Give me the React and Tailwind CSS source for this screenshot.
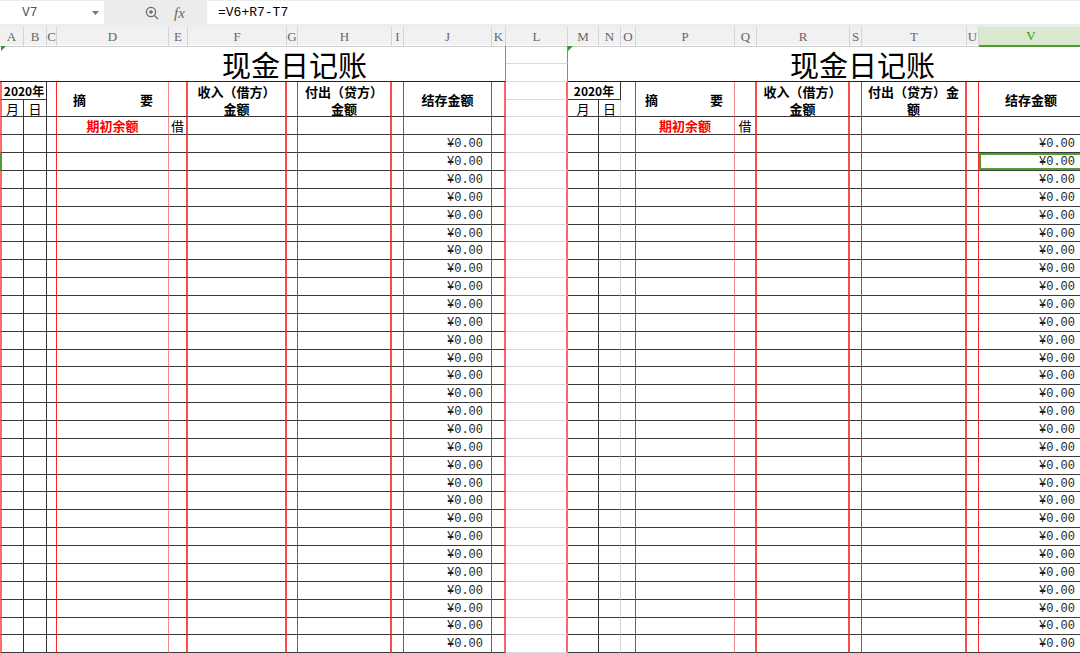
import React from 'react';

const COLS = ['A', 'B', 'C', 'D', 'E', 'F', 'G', 'H', 'I', 'J', 'K', 'L', 'M', 'N', 'O', 'P', 'Q', 'R', 'S', 'T', 'U', 'V'];

// right border of each column inside the two ledgers
const RB = {
  A: 'border-r border-r-[#333]',
  B: 'border-r border-r-[#333]',
  C: 'border-r border-r-[#ff2424]',
  D: 'border-r border-r-[#f58c8c]',
  E: 'border-r-2 border-r-[#ff4a4a]',
  F: 'border-r-2 border-r-[#ff4a4a]',
  G: 'border-r border-r-[#ff2424]',
  H: 'border-r-2 border-r-[#ff4a4a]',
  I: 'border-r border-r-[#ff2424]',
  J: 'border-r border-r-[#ff2424]',
  K: 'border-r-2 border-r-[#ff6464]',
  L: 'border-r-2 border-r-[#ff6464]',
  M: 'border-r border-r-[#333]',
  N: 'border-r border-r-[#d4d4d4]',
  O: 'border-r border-r-[#ff2424]',
  P: 'border-r border-r-[#f58c8c]',
  Q: 'border-r-2 border-r-[#ff4a4a]',
  R: 'border-r-2 border-r-[#ff4a4a]',
  S: 'border-r border-r-[#ff2424]',
  T: 'border-r-2 border-r-[#ff4a4a]',
  U: 'border-r border-r-[#ff2424]',
  V: '',
};

const LINE = 'border-b border-b-[#3a3a3a]';
const GRIDLINE = 'border-b border-b-[#dadada]';
const LEFT_EDGE = 'border-l-2 border-l-[#ff6a6a]';

function Cell({ col, className = '', children }) {
  const bottom = col === 'L' ? GRIDLINE : LINE;
  const left = col === 'A' ? LEFT_EDGE : '';
  return (
    <div className={`flex items-center overflow-hidden whitespace-nowrap pt-[1px] ${RB[col]} ${bottom} ${left} ${className}`}>
      {children}
    </div>
  );
}

function Money() {
  return <span className="ml-auto pr-[8px] font-['Liberation_Mono',monospace] text-[12px] text-[#222]">¥0.00</span>;
}

function FormulaBar() {
  return (
    <div className="flex h-[27px] items-start bg-[#ececec] pt-[1px]">
      <div className="flex h-[23px] w-[104px] items-center justify-between bg-white pl-[22px] pr-[5px]">
        <span className="font-['Liberation_Mono',monospace] text-[13px] text-[#555]">V7</span>
        <svg width="7" height="4" viewBox="0 0 7 4"><path d="M0 0h7L3.5 4z" fill="#777" /></svg>
      </div>
      <div className="flex h-[23px] w-[103px] items-center">
        <svg className="ml-[41px]" width="14" height="14" viewBox="0 0 14 14" fill="none" stroke="#6a6a6a" strokeWidth="1.3">
          <circle cx="6" cy="6" r="4.6" />
          <path d="M9.4 9.4 13 13" />
          <path d="M4 6h4M6 4v4" />
        </svg>
        <span className="ml-[15px] font-['Liberation_Serif',serif] text-[15px] italic text-[#666]">fx</span>
      </div>
      <div className="flex h-[23px] flex-1 items-center bg-white pl-[11px]">
        <span className="font-['Liberation_Mono',monospace] text-[13px] text-black">=V6+R7-T7</span>
      </div>
    </div>
  );
}

function ColumnHeaders() {
  return (
    <div className="grid h-[18px] grid-cols-[24px_23px_10px_112px_19px_99px_11px_94px_12px_88px_14px_62px_31px_22px_15px_99px_22px_93px_12px_105px_12px_104px] bg-[#f1f1f1]">
      {COLS.map((c) =>
        c === 'V' ? (
          <div key={c} className="flex items-center justify-center border-b-2 border-b-[#4e9e2f] bg-[#d8e9cf] font-['Liberation_Serif',serif] text-[13px] text-[#3f9020]">
            {c}
          </div>
        ) : (
          <div key={c} className="flex items-center justify-center overflow-hidden border-r border-b border-r-[#d4d4d4] border-b-[#cdcdcd] font-['Liberation_Serif',serif] text-[13px] text-[#666]">
            {c}
          </div>
        )
      )}
    </div>
  );
}

function HeaderCells() {
  const spread = (side) => (
    <div className={`flex w-full justify-between font-bold ${side}`}>
      <span>摘</span>
      <span>要</span>
    </div>
  );
  const two = 'row-span-2 flex-col justify-center font-bold leading-[17px]';
  return (
    <>
      {/* row 3 */}
      <div className={`col-span-2 flex items-center justify-center pt-[1px] text-[12px] font-bold ${LEFT_EDGE} ${RB.B} ${LINE}`}>2020年</div>
      <Cell col="C" className="row-span-2" />
      <Cell col="D" className="row-span-2">{spread('pl-[16px] pr-[15px]')}</Cell>
      <Cell col="E" className="row-span-2" />
      <Cell col="F" className={two}>
        <span>收入（借方）</span>
        <span>金额</span>
      </Cell>
      <Cell col="G" className="row-span-2" />
      <Cell col="H" className={two}>
        <span>付出（贷方）</span>
        <span>金额</span>
      </Cell>
      <Cell col="I" className="row-span-2" />
      <Cell col="J" className="row-span-2 justify-center font-bold">结存金额</Cell>
      <Cell col="K" className="row-span-2" />
      <Cell col="L" />
      <div className={`col-span-2 flex items-center justify-center pt-[1px] text-[12px] font-bold ${RB.M} ${LINE}`}>2020年</div>
      <Cell col="O" className="row-span-2" />
      <Cell col="P" className="row-span-2">{spread('pl-[9px] pr-[11px]')}</Cell>
      <Cell col="Q" className="row-span-2" />
      <Cell col="R" className={two}>
        <span>收入（借方）</span>
        <span>金额</span>
      </Cell>
      <Cell col="S" className="row-span-2" />
      <Cell col="T" className={two}>
        <span>付出（贷方）金</span>
        <span>额</span>
      </Cell>
      <Cell col="U" className="row-span-2" />
      <Cell col="V" className="row-span-2 justify-center font-bold">结存金额</Cell>
      {/* row 4 */}
      <Cell col="A" className="justify-center">月</Cell>
      <Cell col="B" className="justify-center">日</Cell>
      <Cell col="L" />
      <Cell col="M" className="justify-center">月</Cell>
      <Cell col="N" className="justify-center">日</Cell>
    </>
  );
}

function OpeningRow() {
  return COLS.map((c) => {
    if (c === 'D' || c === 'P')
      return <Cell key={c} col={c} className="justify-center font-bold text-[#ff0000]">期初余额</Cell>;
    if (c === 'E' || c === 'Q')
      return <Cell key={c} col={c} className="justify-center">借</Cell>;
    return <Cell key={c} col={c} />;
  });
}

function DataRow({ selected }) {
  return COLS.map((c) => {
    if (c === 'A' && selected)
      return <div key={c} className={`border-l-2 border-l-[#4e9e2f] ${RB.A} ${LINE}`} />;
    if (c === 'J') return <Cell key={c} col={c}><Money /></Cell>;
    if (c === 'V')
      return (
        <Cell key={c} col={c} className={selected ? 'shadow-[inset_0_0_0_2px_#4f9e30]' : ''}>
          <Money />
        </Cell>
      );
    return <Cell key={c} col={c} />;
  });
}

export default function App() {
  const rows = Array.from({ length: 29 }, (_, i) => i);
  return (
    <div className="h-[653px] w-[1080px] overflow-hidden bg-white font-['Noto_Sans_CJK_SC',sans-serif] text-[13px] leading-[18px] text-black">
      <FormulaBar />
      <ColumnHeaders />
      <div className="grid auto-rows-[17.87px] grid-cols-[24px_23px_10px_112px_19px_99px_11px_94px_12px_88px_14px_62px_31px_22px_15px_99px_22px_93px_12px_105px_12px_104px] pt-[1px]">
        {/* rows 1-2: titles */}
        <div className="relative col-span-11 row-span-2 flex items-center border-r border-b border-r-[#8a8a8a] border-b-[#222] pl-[222px] pt-[3px] text-[29px] leading-none">
          现金日记账
          <span className="absolute left-[1px] top-0 h-0 w-0 border-t-[5px] border-r-[5px] border-t-[#2b9a2b] border-r-transparent" />
        </div>
        <div className={`border-r border-r-[#8a8a8a] ${GRIDLINE}`} />
        <div className="relative col-span-10 row-span-2 flex items-center border-b border-b-[#222] pl-[222px] pt-[3px] text-[29px] leading-none">
          现金日记账
          <span className="absolute left-0 top-0 h-0 w-0 border-t-[5px] border-r-[5px] border-t-[#2b9a2b] border-r-transparent" />
        </div>
        <div className={`border-r border-r-[#8a8a8a] ${GRIDLINE}`} />

        <HeaderCells />
        <OpeningRow />
        {rows.map((i) => (
          <DataRow key={i} selected={i === 1} />
        ))}
      </div>
    </div>
  );
}
